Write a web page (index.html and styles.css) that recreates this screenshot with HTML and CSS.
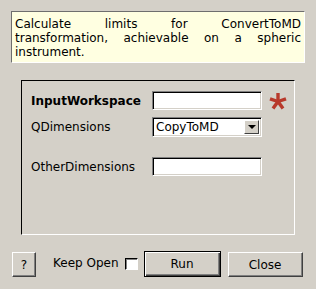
FILE: index.html
```html
<!DOCTYPE html>
<html lang="en">
<head>
  <meta charset="UTF-8">
  <title>ConvertToMD limits</title>
  <link rel="stylesheet" href="styles.css">
</head>
<body>
  <div class="dialog">
    <p class="desc">Calculate limits for ConvertToMD transformation, achievable on a spheric instrument.</p>

    <div class="group">
      <div class="row">
        <label class="label bold">InputWorkspace</label>
        <input class="field" type="text">
        <svg class="required" width="18" height="18" viewBox="0 0 18 18">
          <g stroke="#b8392b" stroke-width="3.4" stroke-linecap="butt">
            <line x1="9" y1="9.5" x2="9" y2="1"/>
            <line x1="9" y1="9.5" x2="17" y2="6.8"/>
            <line x1="9" y1="9.5" x2="14" y2="16.5"/>
            <line x1="9" y1="9.5" x2="4" y2="16.5"/>
            <line x1="9" y1="9.5" x2="1" y2="6.8"/>
          </g>
        </svg>
      </div>
      <div class="row">
        <label class="label">QDimensions</label>
        <div class="combo">
          <span class="combo-text">CopyToMD</span>
          <span class="combo-btn"><span class="arrow"></span></span>
        </div>
      </div>
      <div class="row spaced">
        <label class="label">OtherDimensions</label>
        <input class="field" type="text">
      </div>
    </div>

    <div class="buttons">
      <button class="btn help">?</button>
      <span class="keep">Keep Open</span>
      <span class="check"></span>
      <button class="btn run">Run</button>
      <button class="btn close">Close</button>
    </div>
  </div>
</body>
</html>
```

FILE: styles.css
```css
/* Classic Qt dialog look */
body {
  margin: 0;
  background-color: #d4d0c8;
  font-family: "DejaVu Sans", sans-serif;
  font-size: 12px;
  color: #000;
}
.dialog {
  width: 316px;
  height: 289px;
  padding: 11px 11px 0 11px;
  box-sizing: border-box;
}
.desc {
  margin: 0;
  width: 294px;
  height: 52px;
  box-sizing: border-box;
  padding: 5px 3px 3px 3px;
  background-color: #ffffe1;
  border: 1px solid;
  border-color: #6e6e6e #ffffff #ffffff #6e6e6e;
  line-height: 14px;
  text-align: justify;
}
.group {
  margin: 17px 0 0 10px;
  width: 274px;
  height: 155px;
  box-sizing: border-box;
  padding: 10px 0 0 9px;
  border: 1px solid;
  border-color: #000 #ffffff #ffffff #000;
}
.row {
  display: flex;
  align-items: center;
  height: 19px;
  margin-bottom: 7px;
}
.row.spaced {
  margin-top: 21px;
}
.label {
  width: 121px;
  flex-shrink: 0;
}
.bold {
  font-weight: bold;
}
.field {
  width: 110px;
  height: 19px;
  box-sizing: border-box;
  margin: 0;
  padding: 0 3px;
  background-color: #fff;
  border: 1px solid;
  border-color: #808080 #ffffff #ffffff #808080;
  box-shadow: inset 1px 1px 0 #000, inset -1px -1px 0 #d4d0c8;
  font: inherit;
}
.required {
  margin-left: 7px;
}
.combo {
  width: 110px;
  height: 20px;
  box-sizing: border-box;
  display: flex;
  align-items: center;
  justify-content: space-between;
  background-color: #fff;
  border: 1px solid;
  border-color: #808080 #ffffff #ffffff #808080;
  box-shadow: inset 1px 1px 0 #000, inset -1px -1px 0 #d4d0c8;
  padding: 0 2px 0 3px;
}
.combo-btn {
  width: 15px;
  height: 14px;
  box-sizing: border-box;
  display: flex;
  align-items: center;
  justify-content: center;
  background-color: #d4d0c8;
  border: 1px solid;
  border-color: #ffffff #404040 #404040 #ffffff;
}
.arrow {
  width: 0;
  height: 0;
  border-left: 4px solid transparent;
  border-right: 4px solid transparent;
  border-top: 4px solid #000;
}
.buttons {
  display: flex;
  align-items: flex-start;
  margin-top: 16px;
}
.btn {
  flex-shrink: 0;
  box-sizing: border-box;
  margin: 0;
  padding: 0;
  background-color: #d4d0c8;
  border: 1px solid;
  border-color: #ffffff #404040 #404040 #ffffff;
  box-shadow: inset -1px -1px 0 #808080;
  font: inherit;
  color: #000;
}
.help {
  margin: 1px 0 0 1px;
  width: 24px;
  height: 25px;
}
.keep {
  flex-shrink: 0;
  white-space: nowrap;
  margin: 5px 0 0 17px;
  line-height: 14px;
}
.check {
  flex-shrink: 0;
  margin: 7px 0 0 6px;
  width: 13px;
  height: 12px;
  box-sizing: border-box;
  background-color: #fff;
  border: 1px solid;
  border-color: #000 #ffffff #ffffff #000;
  box-shadow: 1px 1px 0 #808080 inset;
}
.run {
  margin-left: 6px;
  width: 77px;
  height: 26px;
  border: 1px solid #000;
  box-shadow: inset 1px 1px 0 #fff, inset -1px -1px 0 #404040, inset -2px -2px 0 #808080;
}
.close {
  margin: 1px 0 0 7px;
  width: 75px;
  height: 25px;
}
```
